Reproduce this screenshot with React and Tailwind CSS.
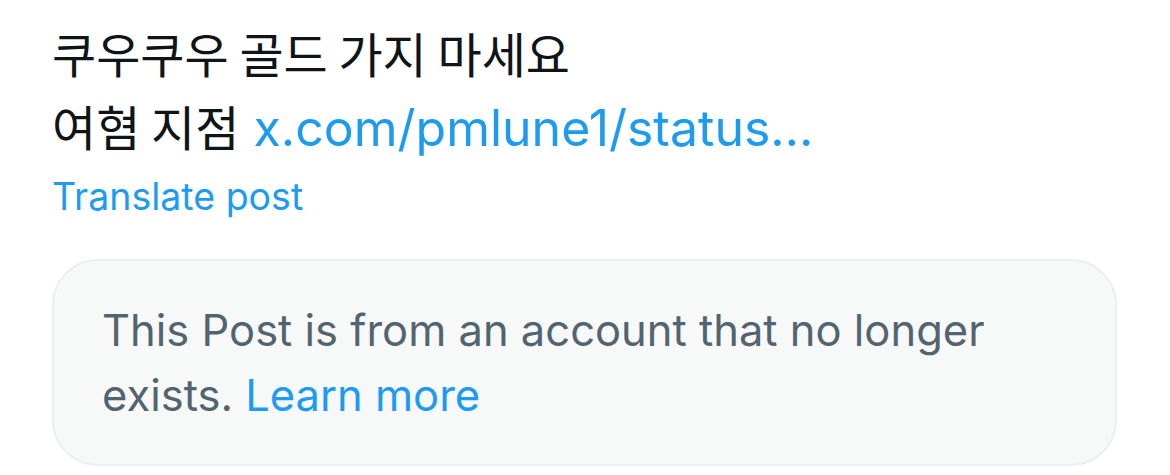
export default function App() {
  const ko = "font-['Noto_Sans_CJK_KR',sans-serif] text-[48px]";
  return (
    <div className="w-[1170px] h-[475px] bg-white pl-[52px] pr-[53px] pt-[17px] font-['Inter','Noto_Sans_CJK_KR',sans-serif] overflow-hidden">
      <div className="text-[50px] leading-[70px] text-[#0f1419]">
        <div>
          <span className={ko}>쿠우쿠우 골드 가지 마세요</span>
        </div>
        <div>
          <span className={ko}>여혐 지점</span>{" "}
          <span className="text-[#1d9bf0]">x.com/pmlune1/status…</span>
        </div>
      </div>
      <div className="mt-[12px] text-[37.5px] leading-[44px] text-[#1d9bf0]">Translate post</div>
      <div className="mt-[40px] h-[207px] rounded-[46px] border-2 border-[#eceff1] bg-[#f7f9f9] pl-[48px] pr-[40px] pt-[37px]">
        <p className="text-[43.5px] leading-[65px] text-[#536471]">
          This Post is from an account that no longer exists.{" "}
          <span className="text-[#1d9bf0]">Learn more</span>
        </p>
      </div>
    </div>
  );
}
